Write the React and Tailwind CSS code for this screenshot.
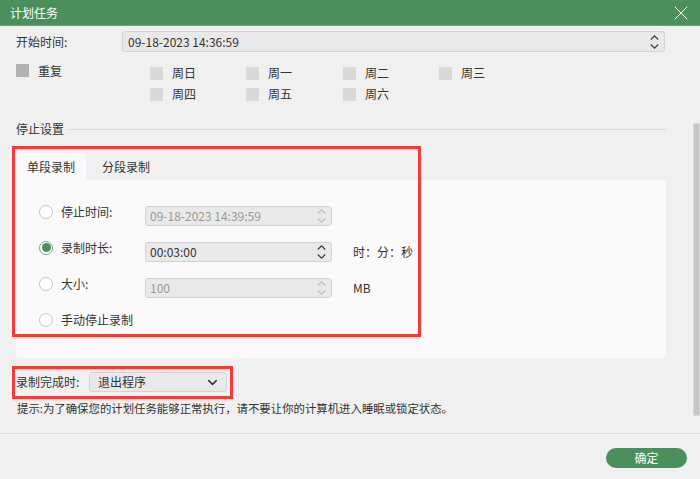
import { X, ChevronDown } from 'lucide-react';

function Spinner({ dim }) {
  const c = dim ? '#bdbdbd' : '#3a3a3a';
  return (
    <div className="flex flex-col items-center gap-[4px] pr-[5px]">
      <svg width="9" height="5" viewBox="0 0 9 5">
        <path d="M0.8 4.5 L4.5 0.8 L8.2 4.5" fill="none" stroke={c} strokeWidth="1.1" />
      </svg>
      <svg width="9" height="5" viewBox="0 0 9 5">
        <path d="M0.8 0.5 L4.5 4.2 L8.2 0.5" fill="none" stroke={c} strokeWidth="1.1" />
      </svg>
    </div>
  );
}

function Radio({ checked }) {
  return (
    <span
      className={
        'w-[14px] h-[14px] rounded-full bg-white flex items-center justify-center border ' +
        (checked ? 'border-[#7aa886]' : 'border-[#c4c4c4]')
      }
    >
      {checked && <span className="w-[9px] h-[9px] rounded-full bg-[#4a8f5c]" />}
    </span>
  );
}

function Field({ value, dim }) {
  return (
    <div className="w-[187px] h-[20px] rounded-[3px] border border-[#d3d3d3] bg-[#e9e9e9] flex items-center justify-between">
      <span className={'pl-[4px] text-[12px] ' + (dim ? 'text-[#9a9a9a]' : 'text-[#333]')}>{value}</span>
      <Spinner dim={dim} />
    </div>
  );
}

export default function App() {
  const days = [
    ['周日', '周一', '周二', '周三'],
    ['周四', '周五', '周六'],
  ];

  const rows = [
    { label: '停止时间:', value: '09-18-2023 14:39:59', dim: true },
    { label: '录制时长:', value: '00:03:00', checked: true, unit: '时：分：秒' },
    { label: '大小:', value: '100', dim: true, unit: 'MB' },
    { label: '手动停止录制' },
  ];

  return (
    <div className="relative w-[700px] h-[479px] bg-[#f0f0f0] flex flex-col text-[12px] text-[#333] font-['Noto_Sans_CJK_SC','Noto_Sans',sans-serif] overflow-hidden">
      {/* title bar */}
      <div className="h-[26px] bg-[#4a8f5c] border-b border-[#6aa47a] flex items-center justify-between pl-[10px] pr-[7px]">
        <span className="text-white text-[12px]">计划任务</span>
        <X size={24} strokeWidth={1} className="text-white" />
      </div>

      <div className="h-[407px] flex">
        <div className="w-[650px] ml-[16px] flex flex-col">
          {/* start time */}
          <div className="mt-[5px] h-[21px] flex items-center">
            <span className="w-[106px]">开始时间:</span>
            <div className="w-[543px] h-[21px] rounded-[3px] border border-[#d3d3d3] bg-[#e9e9e9] flex items-center justify-between">
              <span className="pl-[5px]">09-18-2023 14:36:59</span>
              <Spinner />
            </div>
          </div>

          {/* repeat */}
          <div className="mt-[12px] flex">
            <div className="w-[134px] h-[13px] flex items-center gap-[9px]">
              <span className="w-[13px] h-[13px] bg-[#b3b3b3]" />
              <span>重复</span>
            </div>
            <div className="flex flex-col gap-[8px]">
              {days.map((row, i) => (
                <div key={i} className="grid grid-cols-[96px_97px_96px_96px] h-[13px]">
                  {row.map((d) => (
                    <div key={d} className="flex items-center gap-[9px]">
                      <span className="w-[13px] h-[13px] bg-[#d9d9d9]" />
                      <span>{d}</span>
                    </div>
                  ))}
                </div>
              ))}
            </div>
          </div>

          {/* stop settings header */}
          <div className="mt-[23px] h-[16px] flex items-center">
            <span>停止设置</span>
            <span className="flex-1 h-px bg-[#dadada] ml-[4px]" />
          </div>

          {/* tabs */}
          <div className="mt-[16px] h-[27px] flex">
            <div className="px-[11px] rounded-t-[4px] bg-[#fafafa] flex items-center">单段录制</div>
            <div className="px-[16px] flex items-center">分段录制</div>
          </div>
          <div className="h-[178px] bg-[#fafafa] rounded-b-[4px] rounded-tr-[4px] flex flex-col gap-[16px] pt-[26px] pl-[23px]">
            {rows.map((r) => (
              <div key={r.label} className="h-[20px] flex items-center">
                <div className="w-[106px] flex items-center gap-[8px] mb-[9px]">
                  <Radio checked={r.checked} />
                  <span>{r.label}</span>
                </div>
                {r.value && <Field value={r.value} dim={r.dim} />}
                {r.unit && <span className="ml-[21px]">{r.unit}</span>}
              </div>
            ))}
          </div>

          {/* finish action */}
          <div className="mt-[14px] h-[20px] flex items-center">
            <span className="w-[73px]">录制完成时:</span>
            <div className="w-[138px] h-[20px] rounded-[3px] border border-[#d3d3d3] bg-[#e9e9e9] flex items-center justify-between pl-[8px] pr-[6px]">
              <span>退出程序</span>
              <ChevronDown size={15} strokeWidth={2.4} className="text-[#333]" />
            </div>
          </div>

          <div className="mt-[9px] h-[16px] flex items-center pl-[1px] text-[11.4px]">
            提示:为了确保您的计划任务能够正常执行，请不要让你的计算机进入睡眠或锁定状态。
          </div>
        </div>

        {/* scrollbar */}
        <div className="ml-auto w-[7px]">
          <div className="mt-[97px] h-[293px] bg-[#c6c6c6] border border-[#dadada]" />
        </div>
      </div>

      {/* footer */}
      <div className="flex-1 border-t border-[#dedede] flex justify-end pt-[14px] pr-[13px]">
        <button className="w-[81px] h-[20px] rounded-full bg-[#4a8f5c] text-white text-[12px] leading-none">
          确定
        </button>
      </div>

      {/* annotation boxes */}
      <div className="absolute left-[12px] top-[146px] w-[409px] h-[191px] border-[3px] border-[#f23b3b]" />
      <div className="absolute left-[12px] top-[366px] w-[221px] h-[33px] border-[3px] border-[#f23b3b]" />
    </div>
  );
}
